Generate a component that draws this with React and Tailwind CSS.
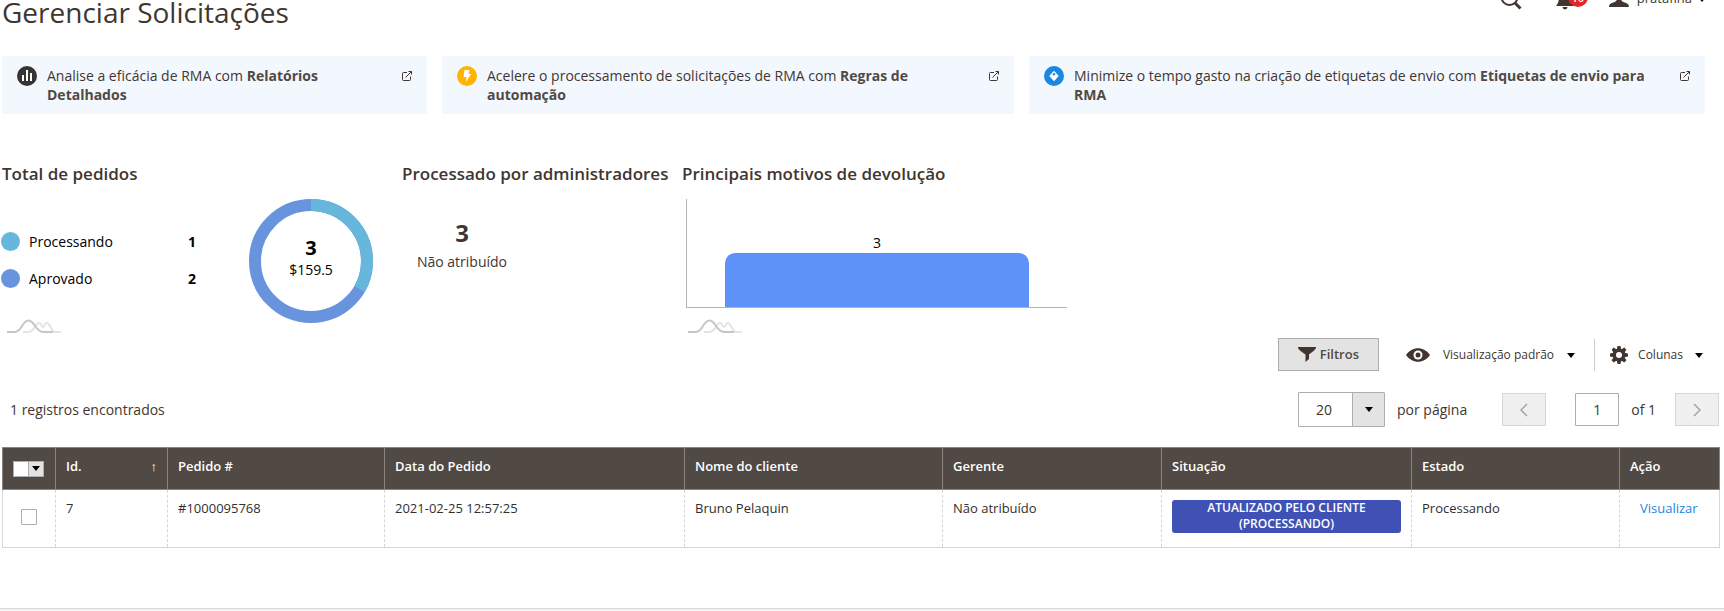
import React from "react";

const banners = [
  {
    width: "w-[425px]",
    icon: "chart",
    text: "Analise a eficácia de RMA com ",
    link: "Relatórios Detalhados",
  },
  {
    width: "w-[572px]",
    icon: "bolt",
    text: "Acelere o processamento de solicitações de RMA com ",
    link: "Regras de automação",
  },
  {
    width: "w-[676px]",
    icon: "tag",
    text: "Minimize o tempo gasto na criação de etiquetas de envio com ",
    link: "Etiquetas de envio para RMA",
  },
];

const columns = [
  { name: "Id.", width: "w-[112px]", sorted: true },
  { name: "Pedido #", width: "w-[217px]" },
  { name: "Data do Pedido", width: "w-[300px]" },
  { name: "Nome do cliente", width: "w-[258px]" },
  { name: "Gerente", width: "w-[219px]" },
  { name: "Situação", width: "w-[250px]" },
  { name: "Estado", width: "w-[208px]" },
  { name: "Ação", width: "w-[100px]" },
];

function BannerIcon({ name }) {
  if (name === "chart") {
    return (
      <svg viewBox="0 0 20 20" className="size-5 shrink-0" aria-hidden="true">
        <circle cx="10" cy="10" r="10" fill="#373330" />
        <path d="M5 9h2v6H5zM9 4h2v11H9zM13 7h2v8h-2z" fill="#fff" />
      </svg>
    );
  }
  if (name === "bolt") {
    return (
      <svg viewBox="0 0 20 20" className="size-5 shrink-0" aria-hidden="true">
        <circle cx="10" cy="10" r="10" fill="#ffb400" />
        <path d="M7.500 4h5l-1 4H14l-5 8 .5-5H6.500z" fill="#fff" />
      </svg>
    );
  }
  return (
    <svg viewBox="0 0 20 20" className="size-5 shrink-0" aria-hidden="true">
      <circle cx="10" cy="10" r="10" fill="#1a87e0" />
      <path d="M10 5.300 14.200 10 10 14.700 5.800 10z" fill="#fff" stroke="#fff" strokeLinejoin="round" />
      <circle cx="10" cy="8.300" r="1.200" fill="#1a87e0" />
    </svg>
  );
}

function ExternalIcon() {
  return (
    <svg viewBox="0 0 12 12" className="mt-1 size-3 shrink-0" fill="none" stroke="#41362f" aria-hidden="true">
      <path d="M6 2.500H2.500a1 1 0 0 0-1 1v6a1 1 0 0 0 1 1h6a1 1 0 0 0 1-1V6.500M4.500 7.500l6-6M7.500 1.500h3v3" />
    </svg>
  );
}

function Caret({ className = "" }) {
  return (
    <svg viewBox="0 0 8 5" className={"h-[5px] w-2 shrink-0 " + className} aria-hidden="true">
      <path d="M0 0h8L4 5z" fill="#000" />
    </svg>
  );
}

function Waves() {
  return (
    <svg viewBox="0 0 54 14" className="h-3.5 w-[54px]" fill="none" strokeWidth="2" aria-hidden="true">
      <path d="M16 13h5C28 13 28 4 32 4c2.500 0 2.500 4 4 4s1.500-4 3.500-4C43.500 4 44 13 48 13h6" stroke="#e4e4e4" />
      <path d="M0 13h8C15 13 15 1.500 21.500 1.500S28 13 36 13h10" stroke="#c6c6c6" />
    </svg>
  );
}

function Donut() {
  return (
    <div className="relative size-[124px]">
      <svg viewBox="0 0 124 124" className="size-full" fill="none" strokeWidth="12" aria-hidden="true">
        <circle cx="62" cy="62" r="56" stroke="#6794dc" />
        <path d="M62 6A56 56 0 0 1 110.500 90" stroke="#67b7dc" />
      </svg>
      <div className="absolute inset-0 flex flex-col items-center justify-center pb-2 text-black">
        <strong className="text-xl leading-6">3</strong>
        <span>$159.5</span>
      </div>
    </div>
  );
}

function LegendRow({ label, value, dot }) {
  return (
    <li className="flex h-[37px] items-center text-black">
      <span className={"size-[19px] rounded-full " + dot} />
      <span className="ml-[9px] flex-1">{label}</span>
      <strong>{value}</strong>
    </li>
  );
}

export default function App() {
  return (
    <div className="overflow-hidden bg-white font-['Open_Sans','Noto_Sans',sans-serif] text-sm leading-[19px] text-[#41362f]">
      <header className="flex h-14 items-start justify-between pl-0.5">
        <h1 className="-mt-[7px] text-[28px] leading-[38px]">Gerenciar Solicitações</h1>
        <div className="-mt-3 flex items-start pr-[18px]">
          <button type="button" aria-label="Pesquisar" className="mr-[34px]">
            <svg viewBox="0 0 22 22" className="size-[22px]" fill="none" stroke="#41362f" aria-hidden="true">
              <circle cx="9.500" cy="9" r="8" strokeWidth="2" />
              <path d="m15 15 5.500 5.500" strokeWidth="3" />
            </svg>
          </button>
          <button type="button" aria-label="Notificações" className="relative mr-[35px] w-[18px]">
            <svg viewBox="0 0 18 22" className="h-[22px] w-[18px]" fill="#41362f" aria-hidden="true">
              <path d="M9 1c4 0 6 3 6 7 0 5 1 8 3 10H0c2-2 3-5 3-10 0-4 2-7 6-7zM6.500 19h5a2.500 2.500 0 0 1-5 0z" />
            </svg>
            <span className="absolute -top-px left-3 flex size-5 items-center justify-center rounded-full bg-[#e22626] text-[11px] font-semibold text-white">
              10
            </span>
          </button>
          <button type="button" className="flex items-center">
            <svg viewBox="0 0 20 20" className="h-5 w-5" fill="#41362f" aria-hidden="true">
              <path d="M10 0c3 0 5 2.200 5 5.500 0 3-1 5-2.500 6.500 0 1 .5 1.500 2 2 3 1 5.500 2 5.500 5H0c0-3 2.500-4 5.500-5 1.500-.5 2-1 2-2C6 10.500 5 8.500 5 5.500 5 2.200 7 0 10 0z" />
            </svg>
            <span className="ml-2 text-[13px]">pratafina</span>
            <Caret className="mt-0.5 ml-1.5" />
          </button>
        </div>
      </header>

      <main className="pr-[5px] pl-0.5">
        <section className="flex gap-[15px] pr-3.5">
          {banners.map((b) => (
            <div key={b.icon} className={"flex min-w-0 items-start bg-[#f3f8ff] py-2.5 pr-3.5 pl-[15px] " + b.width}>
              <BannerIcon name={b.icon} />
              <p className="ml-2.5 flex-1 pr-7">
                {b.text}
                <a href="#" className="font-bold text-[#514943]">
                  {b.link}
                </a>
              </p>
              <ExternalIcon />
            </div>
          ))}
        </section>

        <section className="flex pt-12">
          <div className="w-[400px]">
            <h2 className="text-[17px] leading-6 font-semibold">Total de pedidos</h2>
            <div className="flex pt-[13px]">
              <ul className="-ml-px w-[195px] pt-6">
                <LegendRow label="Processando" value="1" dot="bg-[#67b7dc]" />
                <LegendRow label="Aprovado" value="2" dot="bg-[#6794dc]" />
              </ul>
              <div className="ml-[53px]">
                <Donut />
              </div>
            </div>
            <div className="-mt-1 pl-[5px]">
              <Waves />
            </div>
          </div>
          <div className="w-[280px]">
            <h2 className="text-[17px] leading-6 font-semibold whitespace-nowrap">Processado por administradores</h2>
            <div className="flex w-[120px] flex-col items-center pt-7">
              <strong className="text-2xl leading-[38px]">3</strong>
              <span>Não atribuído</span>
            </div>
          </div>
          <div>
            <h2 className="text-[17px] leading-6 font-semibold">Principais motivos de devolução</h2>
            <div className="mt-[13px] ml-1 flex h-[109px] w-[381px] flex-col items-center justify-end border-b border-l border-[#b3b3b3] text-black">
              <span className="mb-px">3</span>
              <div className="h-[54px] w-[304px] rounded-t-[10px] bg-[#5e92f8]" />
            </div>
            <div className="pt-[11px] pl-1.5">
              <Waves />
            </div>
          </div>
        </section>

        <section className="flex items-center justify-end pt-[5px] pr-4">
          <button
            type="button"
            className="flex h-[33px] w-[101px] items-center justify-center gap-1 border border-[#adadad] bg-[#e3e3e3] text-[13px] font-semibold text-[#514943]"
          >
            <svg viewBox="0 0 18 15" className="h-[15px] w-[18px]" fill="#41362f" aria-hidden="true">
              <path d="M0 0h18c0 2-1 3-7 7.500V12l-3.500 3V7.500C1 3 0 2 0 0z" />
            </svg>
            Filtros
          </button>
          <button type="button" className="ml-[27px] flex items-center text-xs">
            <svg viewBox="0 0 24 14" className="h-3.5 w-6" aria-hidden="true">
              <path d="M0 7c6-9 18-9 24 0-6 9-18 9-24 0z" fill="#41362f" />
              <circle cx="12" cy="7" r="4.500" fill="#fff" />
              <circle cx="12" cy="7" r="2.500" fill="#41362f" />
            </svg>
            <span className="ml-[13px]">Visualização padrão</span>
            <Caret className="mt-0.5 ml-[13px]" />
          </button>
          <span className="ml-[19px] h-8 border-l border-[#ccc]" />
          <button type="button" className="ml-[15px] flex items-center text-xs">
            <svg viewBox="0 0 18 18" className="size-[18px]" aria-hidden="true">
              <g fill="#41362f">
                <circle cx="9" cy="9" r="6.500" />
                <path d="M7.500 0h3l.8 4H6.700zM7.500 18h3l.8-4H6.700zM0 7.500v3l4 .8V6.700zM18 7.500v3l-4 .8V6.700z" />
                <path
                  d="M7.500 0h3l.8 4H6.700zM7.500 18h3l.8-4H6.700zM0 7.500v3l4 .8V6.700zM18 7.500v3l-4 .8V6.700z"
                  transform="rotate(45 9 9)"
                />
              </g>
              <circle cx="9" cy="9" r="3" fill="#fff" />
            </svg>
            <span className="ml-2.5">Colunas</span>
            <Caret className="mt-0.5 ml-3" />
          </button>
        </section>

        <section className="flex items-center justify-between pt-[21px]">
          <p className="pl-2">1 registros encontrados</p>
          <div className="flex items-center">
            <label className="flex items-center">
              <span className="relative flex items-center">
                <select className="h-[35px] w-[87px] appearance-none rounded-[1px] border border-[#adadad] bg-white pl-[17px]">
                  <option>20</option>
                </select>
                <span className="pointer-events-none absolute top-px right-px bottom-px flex w-[32px] items-center justify-center border-l border-[#adadad] bg-[#e3e3e3]">
                  <Caret />
                </span>
              </span>
              <span className="ml-3">por página</span>
            </label>
            <button
              type="button"
              disabled
              aria-label="Página anterior"
              className="ml-[35px] flex h-[33px] w-11 items-center justify-center border border-[#d6d6d6] bg-[#f0f0f0]"
            >
              <svg viewBox="0 0 8 14" className="h-3.5 w-2" fill="none" stroke="#a6a29f" strokeWidth="1.500" aria-hidden="true">
                <path d="M7 1 1 7l6 6" />
              </svg>
            </button>
            <label className="ml-[29px] flex items-center">
              <input
                type="text"
                defaultValue="1"
                className="h-[33px] w-11 rounded-[1px] border border-[#adadad] bg-white text-center"
              />
              <span className="ml-3">of 1</span>
            </label>
            <button
              type="button"
              disabled
              aria-label="Próxima página"
              className="ml-[19px] flex h-[33px] w-11 items-center justify-center border border-[#d6d6d6] bg-[#f0f0f0]"
            >
              <svg viewBox="0 0 8 14" className="h-3.5 w-2" fill="none" stroke="#a6a29f" strokeWidth="1.500" aria-hidden="true">
                <path d="m1 1 6 6-6 6" />
              </svg>
            </button>
          </div>
        </section>

        <table className="mt-5 w-full table-fixed border-collapse text-left text-[13px] leading-4">
          <thead>
            <tr className="h-[42px] bg-[#514943] text-white">
              <th className="w-[53px] border border-[#8a837f] p-0">
                <button
                  type="button"
                  aria-label="Opções de seleção"
                  className="ml-2.5 flex h-4 w-[31px] border border-[#adadad] bg-white"
                >
                  <span className="ml-auto flex h-full w-[15px] items-center justify-center border-l border-[#adadad] bg-[#e3e3e3]">
                    <Caret />
                  </span>
                </button>
              </th>
              {columns.map((c) => (
                <th key={c.name} className={"border border-[#8a837f] px-2.5 pb-1.5 font-semibold " + c.width}>
                  <span className="flex justify-between">
                    {c.name}
                    {c.sorted && <span className="font-normal">↑</span>}
                  </span>
                </th>
              ))}
            </tr>
          </thead>
          <tbody>
            <tr className="h-[58px] border border-[#d6d6d6] align-top text-[#303030] [&>td+td]:border-l [&>td+td]:border-dashed [&>td+td]:border-[#d6d6d6] [&>td]:px-2.5 [&>td]:pt-2.5">
              <td>
                <input
                  type="checkbox"
                  aria-label="Selecionar pedido 7"
                  className="mt-[9px] ml-2 block size-4 appearance-none rounded-[1px] border border-[#adadad] bg-white"
                />
              </td>
              <td>7</td>
              <td>#1000095768</td>
              <td>2021-02-25 12:57:25</td>
              <td>Bruno Pelaquin</td>
              <td>Não atribuído</td>
              <td>
                <span className="block rounded-[3px] bg-[#3f51b5] pb-px text-center text-xs font-semibold text-white uppercase">
                  Atualizado pelo cliente (Processando)
                </span>
              </td>
              <td>Processando</td>
              <td>
                <a href="#" className="ml-2.5 text-[#1a87e0]">
                  Visualizar
                </a>
              </td>
            </tr>
          </tbody>
        </table>
      </main>

      <footer className="mt-[60px] h-[3px] border-t border-[#d9d9d9] bg-[#f5f5f5]" />
    </div>
  );
}
